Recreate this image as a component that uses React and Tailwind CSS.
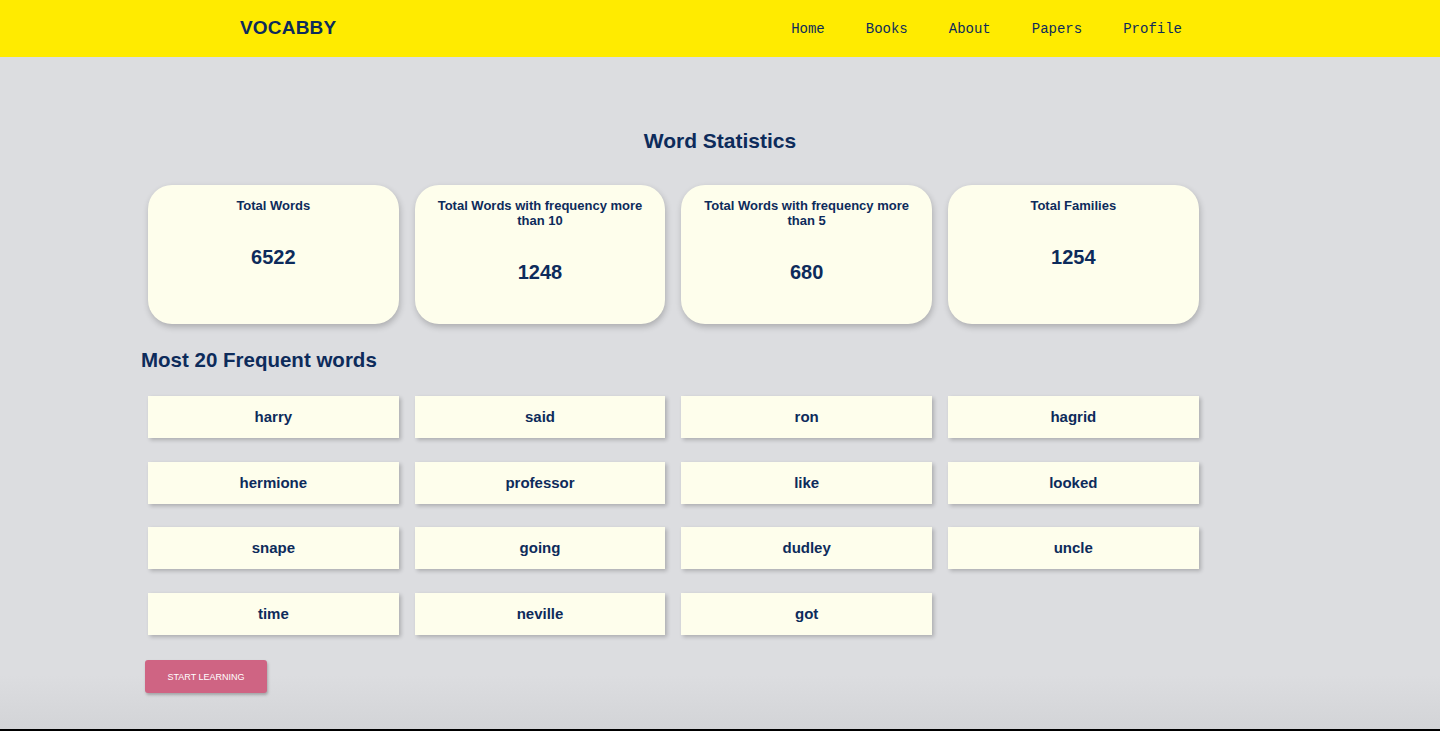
import React from "react"

const stats = [
    { title: "Total Words", value: "6522" },
    { title: "Total Words with frequency more than 10", value: "1248" },
    { title: "Total Words with frequency more than 5", value: "680" },
    { title: "Total Families", value: "1254" },
]

const words = [
    "harry", "said", "ron", "hagrid",
    "hermione", "professor", "like", "looked",
    "snape", "going", "dudley", "uncle",
    "time", "neville", "got",
]

const navLinks = ["Home", "Books", "About", "Papers", "Profile"]

export default function App() {
    return (
        <div className="flex flex-col h-[731px] bg-[#dcdde0] text-[#0d2b5b] font-['Liberation_Sans',Arial,sans-serif] border-b-2 border-black overflow-hidden">
            <header className="h-[57px] bg-[#ffeb00] shrink-0">
                <div className="w-[960px] mx-auto h-full flex items-center justify-between">
                    <div className="text-[19px] font-bold tracking-[0.2px]">VOCABBY</div>
                    <nav className="flex gap-[41px] mr-[18px] pt-[2px] font-['Liberation_Mono','Courier_New',monospace] text-[14px]">
                        {navLinks.map(link => (
                            <a key={link} className="cursor-pointer">{link}</a>
                        ))}
                    </nav>
                </div>
            </header>

            <main className="flex-1 bg-[linear-gradient(to_bottom,#dcdde0_0%,#dcdde0_92%,#d3d4d7_100%)]">
                <div className="w-[1160px] mx-auto">
                    <h1 className="text-center text-[21px] font-bold leading-[23px] mt-[72px]">Word Statistics</h1>

                    <div className="flex mt-[33px]">
                        {stats.map(stat => (
                            <div key={stat.title} className="w-[250.67px] h-[139px] mx-[8px] rounded-[24px] bg-[#fefeec] shadow-[1px_3px_6px_rgba(0,0,0,0.22)] pt-[13px] px-[20px] text-center">
                                <div className="text-[13px] font-bold leading-[15px]">{stat.title}</div>
                                <div className="text-[20px] font-bold leading-[24px] mt-[32px]">{stat.value}</div>
                            </div>
                        ))}
                    </div>

                    <h2 className="text-[20.5px] font-bold leading-[23px] mt-[24px] ml-[1px]">Most 20 Frequent words</h2>

                    <div className="grid grid-cols-[repeat(4,250.67px)] gap-x-[16px] gap-y-[23.5px] ml-[8px] mt-[25px]">
                        {words.map(word => (
                            <div key={word} className="h-[42px] bg-[#fefeec] shadow-[2px_2px_4px_rgba(0,0,0,0.22)] flex items-center justify-center pt-[1px] text-[15px] font-bold">
                                {word}
                            </div>
                        ))}
                    </div>

                    <button className="mt-[25px] ml-[5px] w-[122px] h-[33px] rounded-[3px] bg-[#cf6483] text-white text-[9px] uppercase pt-[3px] shadow-[1px_2px_3px_rgba(0,0,0,0.25)]">
                        Start Learning
                    </button>
                </div>
            </main>
        </div>
    )
}
